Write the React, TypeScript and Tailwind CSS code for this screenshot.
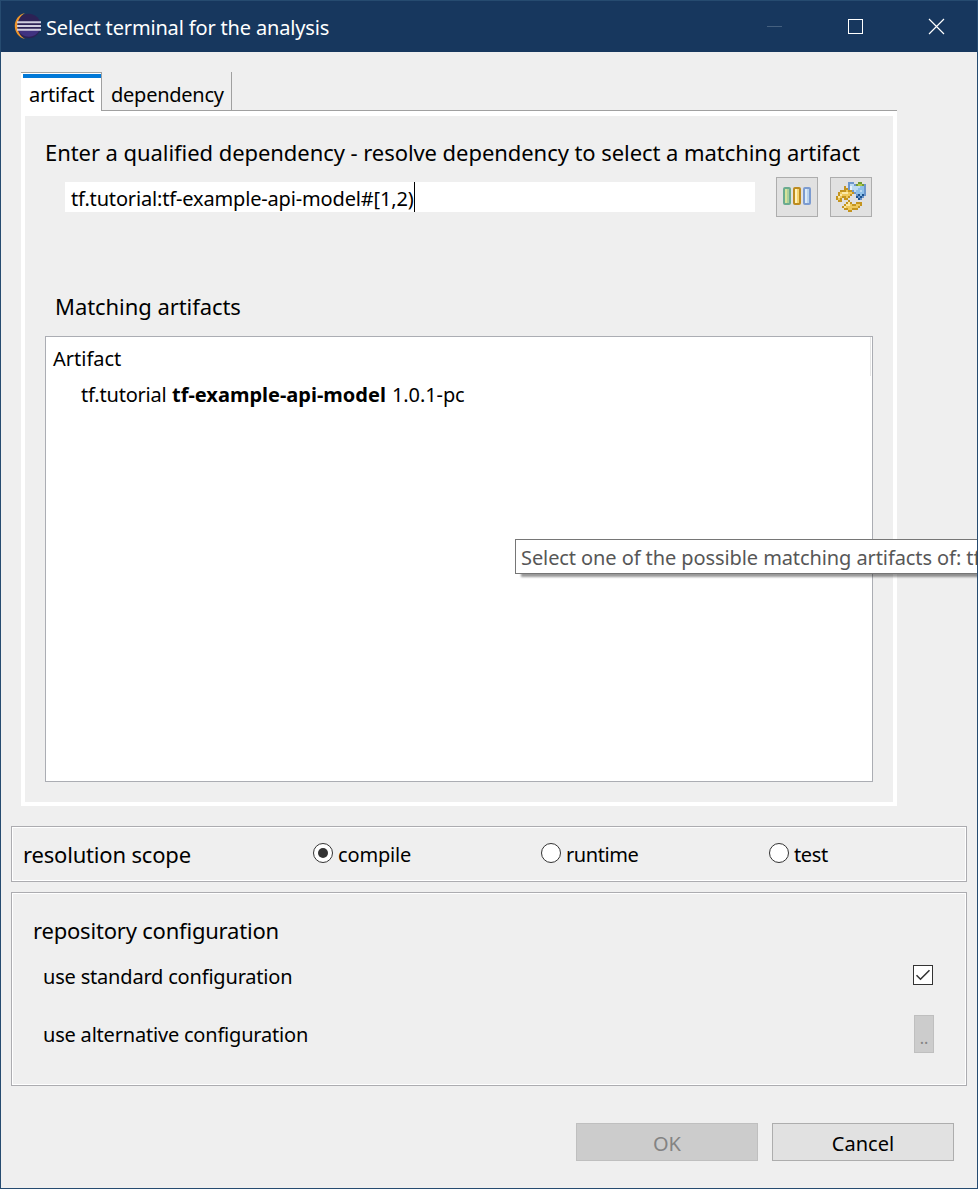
import type { ReactNode } from "react";

const scopes = [
  { name: "compile", tracking: "tracking-[-0.15px]", selected: true },
  { name: "runtime", tracking: "tracking-[-0.42px]", selected: false },
  { name: "test", tracking: "tracking-[-0.4px]", selected: false },
];

function EclipseLogo() {
  return (
    <svg className="mt-[11px] ml-[13px] h-[28px] w-[28px] shrink-0" viewBox="0 0 28 28">
      <circle cx="14.700" cy="14" r="12.200" fill="#2c2255" />
      <path d="M4 18h21.500a12 12 0 0 1-21.500 0z" fill="#403280" />
      <path d="M11 1C4.500 2.500 .8 8 .8 14S4.500 25.500 11 27C6 24 3.300 19 3.300 14S6 4 11 1z" fill="#f0962b" />
      <path d="M3 10.300h24M3 14h24M3 17.700h24" stroke="#d0cedf" strokeWidth="2" />
    </svg>
  );
}

function BarsIcon() {
  const bars = [
    ["#6aab8f", "#d6e39a", "#abcf9b"],
    ["#bd8b20", "#fff1bc", "#f5d56e"],
    ["#7c9bd0", "#dceaf7", "#b9d3ee"],
  ];
  return (
    <svg className="-mt-0.5" width="30" height="20" viewBox="0 0 30 20">
      {bars.map(([edge, light, fill], i) => (
        <g key={edge}>
          <rect x={i * 10 + 2} y="2" width="6" height="16" rx="1" fill={fill} stroke={edge} strokeWidth="2" />
          <rect x={i * 10 + 3} y="3" width="2" height="14" fill={light} />
        </g>
      ))}
    </svg>
  );
}

const palette: Record<string, string> = {
  D: "#c4941f",
  Y: "#efc95c",
  L: "#fbe9a8",
  B: "#6d97cc",
  b: "#bcdaf1",
  w: "#e6f3fb",
  m: "#8fc0e8",
  k: "#1d538f",
  G: "#6f9a35",
  y: "#b4c945",
};

const resolvePixels = [
  "......BBB..GG..",
  "......BbbBGyyGB",
  "....D.BwbbbbmmB",
  "....DDBwbbbmmmB",
  "..DDDYDDBbmmbmB",
  ".DYLLLYYDBmmmmB",
  ".DLYYYYD..BkmkB",
  "DLYDDYD...kBkB.",
  "DYD.DD.....kB..",
  ".DD...D........",
  ".....DLD..DDD..",
  "....DLLYDDYYD..",
  "...DLYYYYYYD...",
  "....DDYYDDD....",
  "......DD.......",
];

function ResolveIcon() {
  return (
    <svg width="30" height="30" viewBox="0 0 15 15" shapeRendering="crispEdges">
      {resolvePixels.flatMap((row, y) =>
        [...row].map((c, x) => c !== "." && <rect key={`${x}-${y}`} x={x} y={y} width="1" height="1" fill={palette[c]} />),
      )}
    </svg>
  );
}

function ToolButton({ label, children }: { label: string; children: ReactNode }) {
  return (
    <button aria-label={label} className="flex h-10 w-[42px] items-center justify-center border border-[#adadad] bg-[#e1e1e1]">
      {children}
    </button>
  );
}

function Group({ className, children }: { className: string; children: ReactNode }) {
  return <section className={`mx-2.5 border border-[#acacb0] shadow-[inset_0_0_0_1px_#fff] ${className}`}>{children}</section>;
}

export default function App() {
  return (
    <div className="relative flex h-[1189px] w-[978px] flex-col overflow-hidden border border-[#264b70] bg-[#efefef] font-['Noto_Sans',sans-serif] text-[20px] leading-7 whitespace-nowrap text-black">
      <header className="flex h-[51px] shrink-0 bg-[#17375e] text-white">
        <EclipseLogo />
        <h1 className="mt-[13px] ml-1 flex-1 tracking-[-0.16px]">Select terminal for the analysis</h1>
        <svg className="h-[51px] w-[210px]" viewBox="0 0 210 51" fill="none">
          <path d="M0 25.500h15" stroke="#45607f" />
          <rect x="81.500" y="18.500" width="14" height="14" stroke="#fff" />
          <path d="M162 18l15 15M177 18l-15 15" stroke="#fff" strokeWidth="1.200" />
        </svg>
      </header>

      <nav className="mt-5 ml-5 flex h-[39px] w-[876px] shrink-0">
        <div className="flex w-[81px] flex-col border-t border-r border-[#a0a0a0] bg-white">
          <div className="mt-px ml-0.5 h-1 shrink-0 bg-[#0078d7]" />
          <span className="mt-[3px] ml-2 tracking-[-0.2px]">artifact</span>
        </div>
        <div className="flex-1 border-b border-[#a0a0a0]">
          <div className="h-[38px] w-[130px] border-r border-[#a0a0a0] pt-[9px] pl-[9px] tracking-[-0.25px]">dependency</div>
        </div>
      </nav>

      <main className="ml-5 flex h-[695px] w-[876px] shrink-0 flex-col border-4 border-t-[5px] border-white">
        <h2 className="mt-[21px] ml-5 text-[22px] leading-[30px] tracking-[-0.06px]">
          Enter a qualified dependency - resolve dependency to select a matching artifact
        </h2>
        <div className="mt-[10px] ml-10 flex h-10">
          <div className="mt-[5px] flex h-[30px] w-[690px] bg-white pl-1.5">
            <span className="mt-[3px] w-[343px] tracking-[-0.16px]">tf.tutorial:tf-example-api-model#[1,2)</span>
            <span className="h-[30px] w-px bg-black" />
          </div>
          <div className="ml-[21px] flex gap-3">
            <ToolButton label="Select version range"><BarsIcon /></ToolButton>
            <ToolButton label="Resolve dependency"><ResolveIcon /></ToolButton>
          </div>
        </div>
        <h2 className="mt-[74px] ml-[30px] text-[22px] leading-[30px] tracking-[-0.06px]">Matching artifacts</h2>
        <div className="mt-[15px] ml-5 flex h-[446px] w-[828px] flex-col border border-[#abadb3] bg-white">
          <div className="mr-px h-[39px] border-r border-[#e5e5e5] pt-2 pl-[7px]">Artifact</div>
          <div className="mt-[5px] flex pl-[35px]">
            <span className="w-[91px] tracking-[-0.2px]">tf.tutorial</span>
            <b className="w-[220px]">tf-example-api-model</b>
            <span className="tracking-[-0.1px]">1.0.1-pc</span>
          </div>
        </div>
      </main>

      <Group className="mt-5 flex h-14 shrink-0 pt-3 pl-[11px]">
        <h2 className="w-[290px] shrink-0 text-[22px] leading-[30px] tracking-[-0.18px]">resolution scope</h2>
        {scopes.map((scope) => (
          <div key={scope.name} className="flex w-[228px] shrink-0 last:w-[100px]">
            <span className="mt-1 flex size-5 items-center justify-center rounded-full border border-[#333] bg-white">
              {scope.selected && <span className="size-2.5 rounded-full bg-[#333]" />}
            </span>
            <span className={`mt-0.5 ml-[5px] ${scope.tracking}`}>{scope.name}</span>
          </div>
        ))}
      </Group>

      <Group className="mt-2.5 flex h-[194px] shrink-0 flex-col pt-[22px] pr-8 pl-[31px]">
        <h2 className="-ml-[11px] pl-px text-[22px] leading-[30px] tracking-[-0.2px]">repository configuration</h2>
        <div className="mt-[18px] flex items-start justify-between">
          <span className="tracking-[-0.19px]">use standard configuration</span>
          <span className="mt-[2px] mr-px flex size-5 items-center justify-center border border-[#333] bg-white">
            <svg width="16" height="16" viewBox="0 0 16 16" fill="none" stroke="#333" strokeWidth="1.600">
              <path d="M1.500 8.300l4 3.900 9-9" />
            </svg>
          </span>
        </div>
        <div className="mt-[30px] flex items-start justify-between">
          <span className="tracking-[-0.2px]">use alternative configuration</span>
          <button className="-mt-[6px] h-[38px] w-5 border border-[#bfbfbf] bg-[#ccc] pt-2 text-[16px] text-[#838383]">..</button>
        </div>
      </Group>

      <footer className="mt-[37px] mr-[23px] flex justify-end gap-3.5">
        <button disabled className="h-[38px] w-[182px] border border-[#bfbfbf] bg-[#ccc] pt-1 text-[#838383]">OK</button>
        <button className="h-[38px] w-[182px] border border-[#adadad] bg-[#e1e1e1] pt-1">Cancel</button>
      </footer>

      <div className="absolute top-[538px] left-[514px] h-[35px] w-[500px] border border-[#767676] bg-white pt-1 pl-[5px] text-[#575757] shadow-[6px_3px_2px_rgba(0,0,0,0.4)]">
        <span className="tracking-[-0.09px]">Select one of the possible matching artifacts of: tf</span>
      </div>
    </div>
  );
}
